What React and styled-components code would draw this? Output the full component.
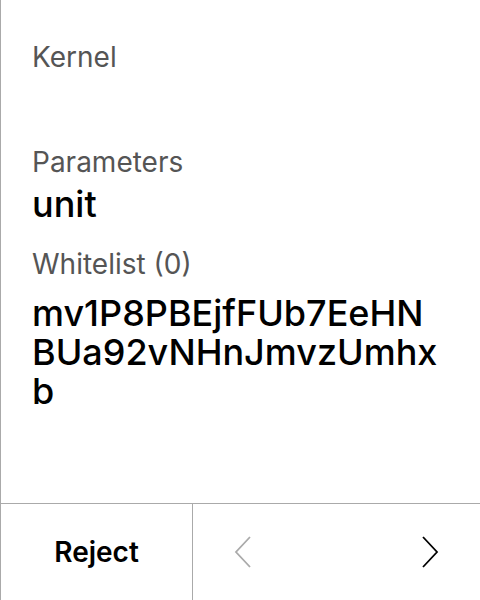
import React from "react";
import styled, { createGlobalStyle } from "styled-components";

const GlobalStyle = createGlobalStyle`
  html, body {
    margin: 0;
    padding: 0;
    background: #fff;
  }
  body {
    font-family: Inter, "Noto Sans", sans-serif;
  }
`;

const Screen = styled.div`
  width: 480px;
  height: 600px;
  box-sizing: border-box;
  border-left: 1px solid #aaaaaa;
  display: flex;
  flex-direction: column;
  background: #fff;
`;

const Body = styled.div`
  flex: 1;
  padding: 37px 36px 0 31px;
  display: flex;
  flex-direction: column;
`;

const Section = styled.div`
  display: flex;
  flex-direction: column;
  margin-top: ${(p) => p.$top || 0}px;
`;

const Label = styled.div`
  font-size: 28px;
  line-height: 40px;
  color: #555555;
`;

const Value = styled.div`
  font-size: 36px;
  line-height: 39px;
  font-weight: 500;
  color: #000;
  word-break: break-all;
  margin-top: ${(p) => p.$top || 0}px;
`;

const Footer = styled.div`
  height: 97px;
  box-sizing: border-box;
  border-top: 1px solid #aaaaaa;
  display: grid;
  grid-template-columns: 192px 1fr;
`;

const RejectButton = styled.button`
  border: none;
  border-right: 1px solid #aaaaaa;
  background: transparent;
  font-family: inherit;
  font-size: 28px;
  font-weight: 600;
  color: #000;
  padding: 0;
  cursor: pointer;
`;

const Pager = styled.div`
  display: flex;
  align-items: center;
  justify-content: space-between;
  padding: 0 41px 0 41px;
`;

const ArrowButton = styled.button`
  border: none;
  background: transparent;
  padding: 0;
  display: flex;
  color: ${(p) => (p.disabled ? "#aaaaaa" : "#000")};
  cursor: pointer;
`;

const Chevron = ({ dir }) => (
  <svg width="18" height="32" viewBox="0 0 18 32" fill="none">
    <path
      d={dir === "left" ? "M16 1 L2 16 L16 31" : "M2 1 L16 16 L2 31"}
      stroke="currentColor"
      strokeWidth="1.8"
    />
  </svg>
);

export default function App() {
  return (
    <>
      <GlobalStyle />
      <Screen>
        <Body>
          <Section>
            <Label>Kernel</Label>
          </Section>
          <Section $top={65}>
            <Label>Parameters</Label>
            <Value $top={3}>unit</Value>
          </Section>
          <Section $top={20}>
            <Label>Whitelist (0)</Label>
            <Value $top={10}>mv1P8PBEjfFUb7EeHNBUa92vNHnJmvzUmhxb</Value>
          </Section>
        </Body>
        <Footer>
          <RejectButton>Reject</RejectButton>
          <Pager>
            <ArrowButton disabled>
              <Chevron dir="left" />
            </ArrowButton>
            <ArrowButton>
              <Chevron dir="right" />
            </ArrowButton>
          </Pager>
        </Footer>
      </Screen>
    </>
  );
}
